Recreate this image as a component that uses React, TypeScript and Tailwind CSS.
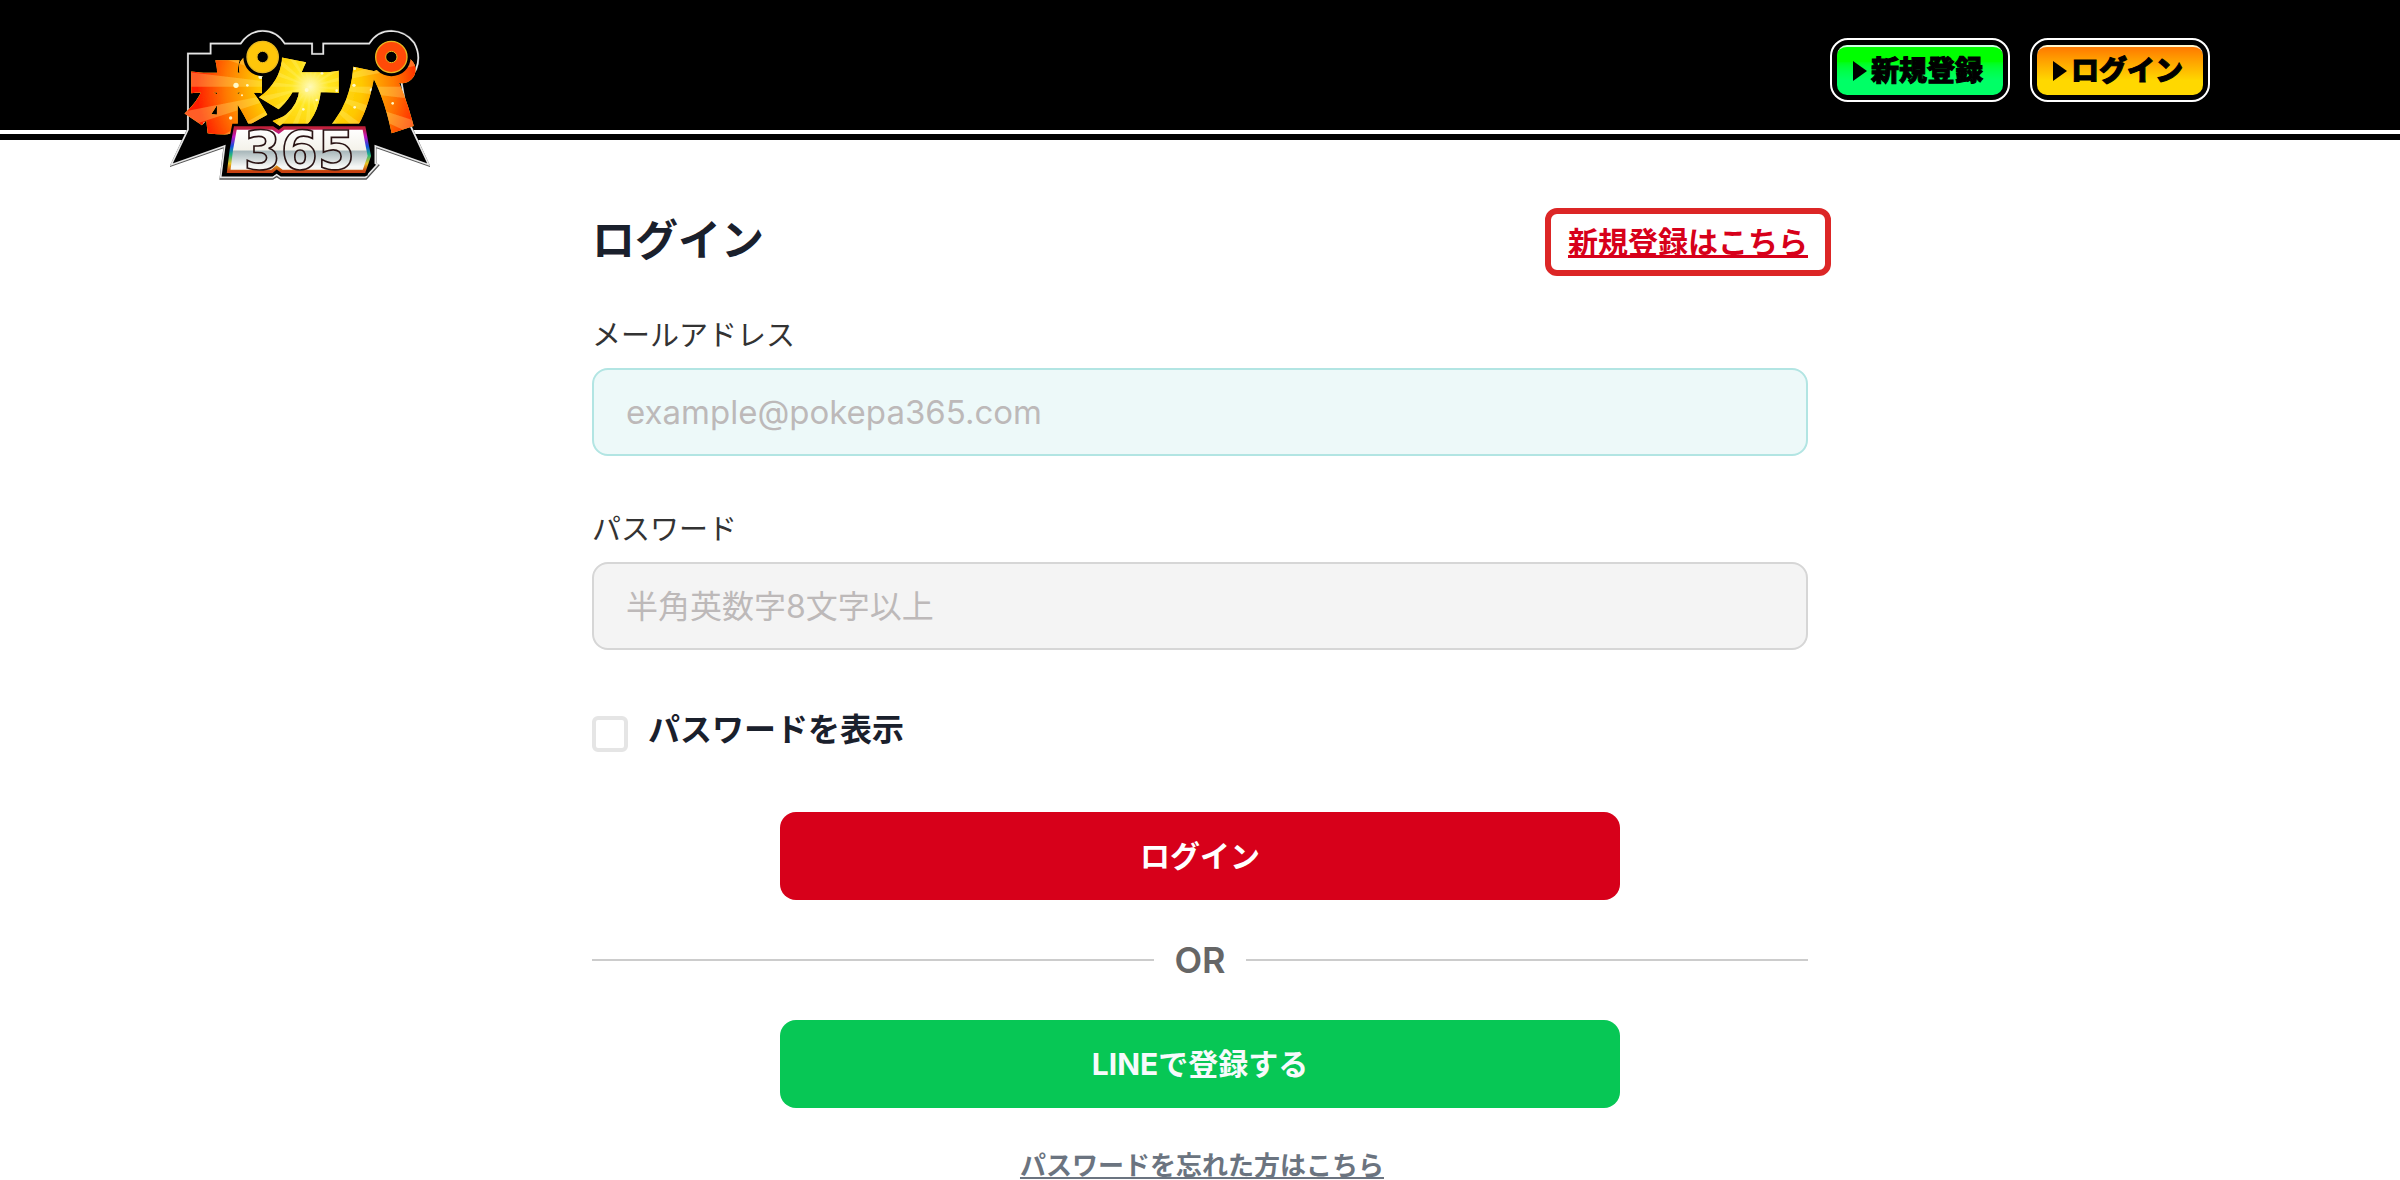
import { useState } from "react";
import clsx from "clsx";

const navLinks = [
  {
    id: "register",
    label: "新規登録",
    href: "#register",
    className: "bg-gradient-to-b from-[#00ff00] from-30% to-[#00ff66] to-70%",
  },
  {
    id: "login",
    label: "ログイン",
    href: "#login",
    className: "bg-gradient-to-b from-[#ff7800] to-[#ffd800] to-70%",
  },
];

const sparks = [
  [538, 118, 8], [560, 112, 5], [532, 150, 4], [548, 174, 5], [584, 146, 4], [530, 212, 4],
  [582, 196, 5], [534, 250, 4], [584, 262, 4], [440, 210, 6], [470, 240, 4], [430, 268, 4],
  [302, 170, 7], [262, 196, 4], [228, 196, 8], [212, 294, 5], [134, 310, 4], [246, 226, 3],
  [652, 250, 5], [698, 250, 4], [634, 210, 5], [668, 320, 4], [648, 204, 3], [486, 160, 4],
];

const rays = Array.from({ length: 20 }, (_, i) => {
  const a = (i * Math.PI) / 10;
  const b = a + 0.12;
  const point = (t: number) => `${450 + Math.cos(t) * 420},${200 + Math.sin(t) * 420}`;
  return `450,200 ${point(a)} ${point(b)}`;
});

function Ring({ cx, cy, fill }: { cx: number; cy: number; fill: string }) {
  return (
    <g>
      <circle cx={cx} cy={cy} r={58} fill="#000" />
      <circle cx={cx} cy={cy} r={47} fill={fill} stroke="#e8b820" strokeWidth={4} />
      <circle cx={cx} cy={cy} r={17} fill="#000" stroke="#e8b820" strokeWidth={3} />
    </g>
  );
}

function Logo() {
  return (
    <svg viewBox="30 24 780 462" className="h-[154px] w-[260px]" role="img" aria-label="ポケパ365">
      <defs>
        <radialGradient id="burst" gradientUnits="userSpaceOnUse" cx="450" cy="200" r="370">
          <stop offset="0" stopColor="#fffbc0" />
          <stop offset="0.15" stopColor="#ffe620" />
          <stop offset="0.42" stopColor="#ffc800" />
          <stop offset="0.68" stopColor="#ff7a00" />
          <stop offset="0.92" stopColor="#ff1c00" />
        </radialGradient>
        <pattern id="sparkle" patternUnits="userSpaceOnUse" width="840" height="510">
          <rect width="840" height="510" fill="url(#burst)" />
          {rays.map((points) => (
            <polygon key={points} points={points} fill="#fff27a" opacity="0.3" />
          ))}
          {sparks.map(([x, y, r]) => (
            <circle key={`${x}-${y}`} cx={x} cy={y} r={r} fill="#fffac8" />
          ))}
        </pattern>
        <filter id="gold-edge">
          <feMorphology in="SourceAlpha" operator="dilate" radius="1" result="edge" />
          <feFlood floodColor="#e8b820" />
          <feComposite in2="edge" operator="in" />
          <feMerge>
            <feMergeNode />
            <feMergeNode in="SourceGraphic" />
          </feMerge>
        </filter>
        <linearGradient id="metal" gradientUnits="userSpaceOnUse" x1="0" y1="326" x2="0" y2="452">
          <stop offset="0" stopColor="#fff" />
          <stop offset="0.5" stopColor="#f4f2ea" />
          <stop offset="0.54" stopColor="#a9b8bb" />
          <stop offset="0.9" stopColor="#f5f7f5" />
        </linearGradient>
        <linearGradient id="rainbow" x1="0" y1="0" x2="0" y2="1">
          <stop offset="0" stopColor="#c0203a" />
          <stop offset="0.2" stopColor="#c416c0" />
          <stop offset="0.42" stopColor="#1650e0" />
          <stop offset="0.62" stopColor="#20b880" />
          <stop offset="0.82" stopColor="#e8c020" />
          <stop offset="1" stopColor="#c84010" />
        </linearGradient>
      </defs>
      <path
        d="M84 101H152V71H242Q268 33 308 33Q350 33 374 71H456V102H490V71H628Q652 33 694 33Q736 34 762 68Q784 108 768 148Q754 174 724 185L744 302L806 436L646 380V432L654 436L618 476H362L350 468L338 476H182L194 380L34 436L84 329Z"
        fill="#000"
        stroke="#555"
        strokeWidth="7"
      />
      <path
        d="M84 101H152V71H242Q268 33 308 33Q350 33 374 71H456V102H490V71H628Q652 33 694 33Q736 34 762 68Q784 108 768 148Q754 174 724 185L744 302L806 434L646 378V430L652 434L617 472H362L350 464L338 472H182L194 378L34 434L84 329Z"
        fill="#000"
        stroke="#e6e6e6"
        strokeWidth="5"
      />
      <text
        x="422"
        y="316"
        className="font-['Noto_Sans_CJK_JP',sans-serif] font-black"
        fill="url(#sparkle)"
        stroke="url(#sparkle)"
        strokeWidth="26"
        fontSize="226"
        textAnchor="middle"
        filter="url(#gold-edge)"
      >
        ポケパ
      </text>
      <Ring cx={308} cy={111} fill="#ffc60a" />
      <Ring cx={694} cy={111} fill="#ff4a08" />
      <path
        d="M226 322H338L356 334L372 322H612L624 378L630 408L614 456H366L350 444L336 456H204L212 390Z"
        fill="#000"
        stroke="#000"
        strokeWidth="22"
      />
      <path
        d="M226 324H338L356 336L372 324H612L622 378L628 408L612 454H366L350 442L336 454H206L214 390Z"
        fill="url(#metal)"
        stroke="url(#rainbow)"
        strokeWidth="10"
      />
      <text
        x="418"
        y="447"
        className="font-['DejaVu_Sans',sans-serif] font-bold"
        fill="url(#metal)"
        stroke="#2a1414"
        strokeWidth="5"
        fontSize="160"
        textAnchor="middle"
      >
        365
      </text>
    </svg>
  );
}

function Header() {
  return (
    <header className="bg-black">
      <div className="relative z-10 mx-auto flex h-[130px] max-w-[2060px] items-start justify-between pr-5">
        <a href="#top" className="pt-7">
          <Logo />
        </a>
        <nav className="flex gap-5 pt-[38px]">
          {navLinks.map((link) => (
            <a
              key={link.id}
              href={link.href}
              className="h-16 w-[180px] rounded-[18px] border-2 border-white p-[5px]"
            >
              <span
                className={clsx(
                  "flex h-full items-center justify-center gap-1 rounded-[10px] border-t-2 border-white/80 pr-1 text-[28px] leading-none font-black text-black [-webkit-text-stroke:1px_black]",
                  link.className
                )}
              >
                <svg viewBox="0 0 14 20" className="h-5 w-[14px]" aria-hidden="true">
                  <path d="M0 0L14 10L0 20Z" />
                </svg>
                {link.label}
              </span>
            </a>
          ))}
        </nav>
      </div>
      <div className="h-1 bg-white" />
      <div className="h-[6px]" />
    </header>
  );
}

function LoginForm() {
  const [showPassword, setShowPassword] = useState(false);

  return (
    <form className="flex flex-col" onSubmit={(e) => e.preventDefault()}>
      <label htmlFor="email" className="pb-3 text-[29px] leading-10 text-[#333]">
        メールアドレス
      </label>
      <input
        id="email"
        type="email"
        placeholder="example@pokepa365.com"
        className="h-[88px] w-full rounded-2xl border-2 border-[#b2e5e3] bg-[#edf9f9] px-8 text-[33px] placeholder:text-[#bdb9b9]"
      />
      <label htmlFor="password" className="pt-[54px] pb-3 text-[29px] leading-10 text-[#333]">
        パスワード
      </label>
      <input
        id="password"
        type={showPassword ? "text" : "password"}
        placeholder="半角英数字8文字以上"
        className="h-[88px] w-full rounded-2xl border-2 border-[#d6d6d6] bg-[#f4f4f4] px-8 text-[32px] placeholder:text-[#bdb9b9]"
      />
      <div className="flex items-start gap-5 pt-[54px]">
        <input
          id="show-password"
          type="checkbox"
          checked={showPassword}
          onChange={(e) => setShowPassword(e.target.checked)}
          className="mt-3 h-9 w-9 appearance-none rounded-md border-4 border-[#e5e5e5] bg-white checked:bg-[#d7001a]"
        />
        <label htmlFor="show-password" className="text-[32px] leading-[52px] font-bold text-[#1a202c]">
          パスワードを表示
        </label>
      </div>
      <button
        type="submit"
        className="mx-auto mt-14 h-[88px] w-full max-w-[840px] rounded-2xl bg-[#d7001a] text-[30px] font-bold text-white"
      >
        ログイン
      </button>
      <div className="flex items-center gap-5 py-8 text-[36px] leading-[56px] font-semibold text-[#666]">
        <span className="h-[2px] flex-1 bg-[#ccc]" />
        OR
        <span className="h-[2px] flex-1 bg-[#ccc]" />
      </div>
      <button
        type="button"
        className="mx-auto h-[88px] w-full max-w-[840px] rounded-2xl bg-[#07c755] text-[30px] font-bold text-[#f7fafc]"
      >
        LINEで登録する
      </button>
      <a
        href="#reset"
        className="mx-auto pt-10 pl-1 text-[26px] leading-9 font-bold text-[#6b7480] underline"
      >
        パスワードを忘れた方はこちら
      </a>
    </form>
  );
}

export default function App() {
  return (
    <div className="bg-white font-['Inter','Noto_Sans_CJK_JP',sans-serif]" lang="ja">
      <Header />
      <main className="mx-auto max-w-[1216px]">
        <div className="flex items-start justify-between pt-[68px] pb-10">
          <h1 className="pt-[2px] text-[43px] leading-[60px] font-bold text-[#1a202c]">ログイン</h1>
          <a
            href="#register"
            className="-mr-[23px] rounded-xl border-[6px] border-[#dc2626] px-[17px] py-2 text-[30px] leading-10 font-bold text-[#d7001a] underline"
          >
            新規登録はこちら
          </a>
        </div>
        <LoginForm />
      </main>
    </div>
  );
}
